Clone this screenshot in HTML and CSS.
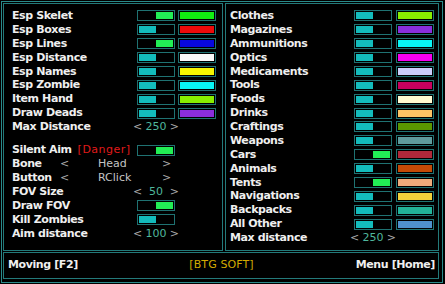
FILE: index.html
```html
<!DOCTYPE html>
<html>
<head>
<meta charset="utf-8">
<title>Menu</title>
<link rel="stylesheet" href="styles.css">
</head>
<body>
<div class="frame">
  <div class="main">
    <section class="panel panel-left">
      <div class="row"><span class="label">Esp Skelet</span><span class="toggle on"><i></i></span><span class="swatch"><i class="c-green"></i></span></div>
      <div class="row"><span class="label">Esp Boxes</span><span class="toggle"><i></i></span><span class="swatch"><i class="c-red"></i></span></div>
      <div class="row"><span class="label">Esp Lines</span><span class="toggle on"><i></i></span><span class="swatch"><i class="c-blue"></i></span></div>
      <div class="row"><span class="label">Esp Distance</span><span class="toggle"><i></i></span><span class="swatch"><i class="c-white"></i></span></div>
      <div class="row"><span class="label">Esp Names</span><span class="toggle"><i></i></span><span class="swatch"><i class="c-yellow"></i></span></div>
      <div class="row"><span class="label">Esp Zombie</span><span class="toggle"><i></i></span><span class="swatch"><i class="c-cyan"></i></span></div>
      <div class="row"><span class="label">Item Hand</span><span class="toggle"><i></i></span><span class="swatch"><i class="c-lime"></i></span></div>
      <div class="row"><span class="label">Draw Deads</span><span class="toggle"><i></i></span><span class="swatch"><i class="c-violet"></i></span></div>
      <div class="row"><span class="label">Max Distance</span><span class="stepper"><b>&lt;</b><em>250</em><b>&gt;</b></span></div>
      <div class="spacer"></div>
      <div class="row"><span class="label">Silent Aim<span class="danger">[Danger]</span></span><span class="toggle on"><i></i></span></div>
      <div class="row select"><span class="label">Bone</span><b>&lt;</b><span class="opt">Head</span><b>&gt;</b></div>
      <div class="row select"><span class="label">Button</span><b>&lt;</b><span class="opt">RClick</span><b>&gt;</b></div>
      <div class="row"><span class="label">FOV Size</span><span class="stepper"><b>&lt;</b><em>50</em><b>&gt;</b></span></div>
      <div class="row"><span class="label">Draw FOV</span><span class="toggle on"><i></i></span></div>
      <div class="row"><span class="label">Kill Zombies</span><span class="toggle"><i></i></span></div>
      <div class="row"><span class="label">Aim distance</span><span class="stepper"><b>&lt;</b><em>100</em><b>&gt;</b></span></div>
    </section>
    <section class="panel panel-right">
      <div class="row"><span class="label">Clothes</span><span class="toggle"><i></i></span><span class="swatch"><i class="c-lime"></i></span></div>
      <div class="row"><span class="label">Magazines</span><span class="toggle"><i></i></span><span class="swatch"><i class="c-violet"></i></span></div>
      <div class="row"><span class="label">Ammunitions</span><span class="toggle"><i></i></span><span class="swatch"><i class="c-cyan"></i></span></div>
      <div class="row"><span class="label">Optics</span><span class="toggle"><i></i></span><span class="swatch"><i class="c-magenta"></i></span></div>
      <div class="row"><span class="label">Medicaments</span><span class="toggle"><i></i></span><span class="swatch"><i class="c-lavender"></i></span></div>
      <div class="row"><span class="label">Tools</span><span class="toggle"><i></i></span><span class="swatch"><i class="c-crimson"></i></span></div>
      <div class="row"><span class="label">Foods</span><span class="toggle"><i></i></span><span class="swatch"><i class="c-cream"></i></span></div>
      <div class="row"><span class="label">Drinks</span><span class="toggle"><i></i></span><span class="swatch"><i class="c-peach"></i></span></div>
      <div class="row"><span class="label">Craftings</span><span class="toggle"><i></i></span><span class="swatch"><i class="c-olive"></i></span></div>
      <div class="row"><span class="label">Weapons</span><span class="toggle"><i></i></span><span class="swatch"><i class="c-cadet"></i></span></div>
      <div class="row"><span class="label">Cars</span><span class="toggle on"><i></i></span><span class="swatch"><i class="c-brick"></i></span></div>
      <div class="row"><span class="label">Animals</span><span class="toggle"><i></i></span><span class="swatch"><i class="c-rust"></i></span></div>
      <div class="row"><span class="label">Tents</span><span class="toggle on"><i></i></span><span class="swatch"><i class="c-sand"></i></span></div>
      <div class="row"><span class="label">Navigations</span><span class="toggle"><i></i></span><span class="swatch"><i class="c-gold"></i></span></div>
      <div class="row"><span class="label">Backpacks</span><span class="toggle"><i></i></span><span class="swatch"><i class="c-sea"></i></span></div>
      <div class="row"><span class="label">All Other</span><span class="toggle"><i></i></span><span class="swatch"><i class="c-steel"></i></span></div>
      <div class="row"><span class="label">Max distance</span><span class="stepper"><b>&lt;</b><em>250</em><b>&gt;</b></span></div>
    </section>
  </div>
  <footer class="bar">
    <span class="bar-left">Moving [F2]</span>
    <span class="brand">[BTG SOFT]</span>
    <span class="bar-right">Menu [Home]</span>
  </footer>
</div>
</body>
</html>
```

FILE: styles.css
```css
html, body {
  margin: 0;
  padding: 0;
  background: #000;
}

body {
  width: 445px;
  height: 284px;
  overflow: hidden;
  font-family: "DejaVu Sans", "Noto Sans", sans-serif;
  font-size: 11px;
  color: #efefef;
}

.frame {
  box-sizing: border-box;
  margin: 1px 0 0 1px;
  width: 442px;
  height: 282px;
  border: 1px solid #2a8a8a;
  padding: 1px 3px 3px 1px;
  display: flex;
  flex-direction: column;
  gap: 1px;
}

.main {
  display: flex;
  gap: 2px;
  height: 248px;
}

.panel {
  box-sizing: border-box;
  height: 248px;
  border: 1px solid #237a7a;
  padding-top: 5px;
}

.panel-left {
  width: 220px;
  padding-left: 8px;
  padding-right: 6px;
}

.panel-right {
  width: 214px;
  padding-left: 4px;
  padding-right: 4px;
}

.row {
  display: grid;
  grid-template-columns: 1fr 38px 38px;
  column-gap: 3px;
  align-items: center;
  height: 13.875px;
  line-height: 13.875px;
  white-space: nowrap;
}

.panel-right .row {
  column-gap: 4px;
}

.label {
  font-weight: bold;
  letter-spacing: -0.4px;
}

.danger {
  margin-left: 6px;
  color: #e01a1a;
  font-weight: normal;
  letter-spacing: 0.5px;
}

.spacer {
  height: 9.5px;
}

.toggle,
.swatch {
  box-sizing: border-box;
  width: 38px;
  height: 11px;
  border: 1px solid #1f7272;
  padding: 1px;
  display: flex;
}

.toggle i {
  display: block;
  width: 17px;
  height: 7px;
  background: #13bcbc;
}

.toggle.on i {
  margin-left: auto;
  background: #22ee55;
}

.swatch i {
  display: block;
  width: 34px;
  height: 7px;
}

.stepper {
  grid-column: 2 / 4;
  margin-left: -4px;
  width: 46px;
  display: flex;
  justify-content: space-between;
}

.stepper b,
.select b {
  font-weight: normal;
  color: #a9a9a9;
}

.stepper em {
  font-style: normal;
  color: #4fb79c;
}

.row.select {
  grid-template-columns: 48px 38px 64px auto;
  column-gap: 0;
}

.opt {
  color: #c4c4c4;
}

.bar {
  box-sizing: border-box;
  height: 27px;
  border: 1px solid #237a7a;
  padding: 0 3px 2px 4px;
  display: grid;
  grid-template-columns: 1fr auto 1fr;
  align-items: center;
  white-space: nowrap;
}

.bar-left,
.bar-right {
  font-weight: bold;
  letter-spacing: -0.4px;
}

.bar-right {
  justify-self: end;
}

.brand {
  color: #d2aa00;
  letter-spacing: 0.1px;
}

.c-green { background: #11ee11; }
.c-red { background: #ee0a0a; }
.c-blue { background: #0808dd; }
.c-white { background: #fafafa; }
.c-yellow { background: #f6f600; }
.c-cyan { background: #08f6f6; }
.c-lime { background: #88ee00; }
.c-violet { background: #8a2edc; }
.c-magenta { background: #f600f0; }
.c-lavender { background: #ccccfa; }
.c-crimson { background: #c8005e; }
.c-cream { background: #fffad0; }
.c-peach { background: #fcc264; }
.c-olive { background: #5a9600; }
.c-cadet { background: #5f9a9c; }
.c-brick { background: #b0283a; }
.c-rust { background: #c44a06; }
.c-sand { background: #eeaa7a; }
.c-gold { background: #f2d23a; }
.c-sea { background: #22b298; }
.c-steel { background: #4f90cc; }
```
